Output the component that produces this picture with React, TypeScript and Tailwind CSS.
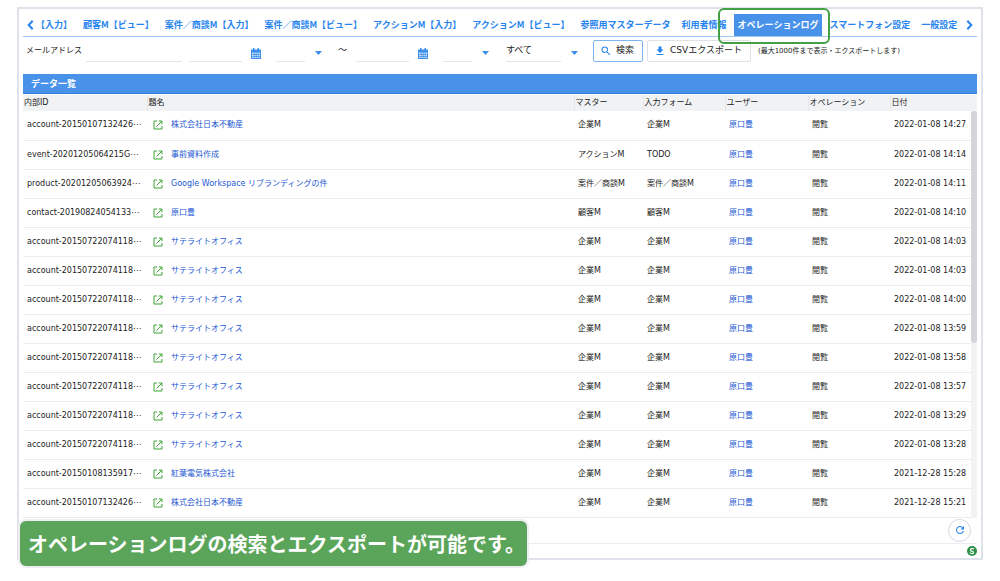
import { useState } from "react";
import type { ReactNode } from "react";
import { MdDownload, MdRefresh, MdSearch } from "react-icons/md";

type LogRow = {
  id: string;
  title: string;
  master: string;
  form: string;
  date: string;
};

const tabs = [
  "【入力】",
  "顧客M【ビュー】",
  "案件／商談M【入力】",
  "案件／商談M【ビュー】",
  "アクションM【入力】",
  "アクションM【ビュー】",
  "参照用マスターデータ",
  "利用者情報",
  "オペレーションログ",
  "スマートフォン設定",
  "一般設定",
];

const ACTIVE_TAB = "オペレーションログ";

const satellite = (date: string): LogRow => ({
  id: "account-20150722074118",
  title: "サテライトオフィス",
  master: "企業M",
  form: "企業M",
  date,
});

const rows: LogRow[] = [
  { id: "account-20150107132426", title: "株式会社日本不動産", master: "企業M", form: "企業M", date: "2022-01-08 14:27" },
  { id: "event-20201205064215G", title: "事前資料作成", master: "アクションM", form: "TODO", date: "2022-01-08 14:14" },
  { id: "product-20201205063924", title: "Google Workspace リブランディングの件", master: "案件／商談M", form: "案件／商談M", date: "2022-01-08 14:11" },
  { id: "contact-20190824054133", title: "原口豊", master: "顧客M", form: "顧客M", date: "2022-01-08 14:10" },
  satellite("2022-01-08 14:03"),
  satellite("2022-01-08 14:03"),
  satellite("2022-01-08 14:00"),
  satellite("2022-01-08 13:59"),
  satellite("2022-01-08 13:58"),
  satellite("2022-01-08 13:57"),
  satellite("2022-01-08 13:29"),
  satellite("2022-01-08 13:28"),
  { id: "account-20150108135917", title: "紅葉電気株式会社", master: "企業M", form: "企業M", date: "2021-12-28 15:28" },
  { id: "account-20150107132426", title: "株式会社日本不動産", master: "企業M", form: "企業M", date: "2021-12-28 15:21" },
];

const columns = [
  { label: "内部ID", width: "w-[124px]" },
  { label: "題名", width: "" },
  { label: "マスター", width: "w-[69px]" },
  { label: "入力フォーム", width: "w-[82px]" },
  { label: "ユーザー", width: "w-[83px]" },
  { label: "オペレーション", width: "w-[82px]" },
  { label: "日付", width: "w-[81px]" },
];

function Chevron({ direction }: { direction: "left" | "right" }) {
  return (
    <svg viewBox="0 0 6 10" className="h-[10px] w-[7px]" fill="none" stroke="currentColor" strokeWidth="2">
      <path d={direction === "left" ? "M5.2 0.8 1.2 5l4 4.2" : "M0.8 0.8l4 4.2-4 4.2"} />
    </svg>
  );
}

function CalendarIcon() {
  return (
    <svg viewBox="0 0 20 22" className="h-[11px] w-[10px]">
      <path d="M4 0h3v3h6V0h3v3h4v19H0V3h4z" fill="#3b8eea" />
      <path
        d="M2 9h3.500v3H2zM7 9h2.500v3H7zM11 9h2.500v3H11zM15 9h3v3h-3zM2 13.500h3.500v2.500H2zM7 13.500h2.500v2.500H7zM11 13.500h2.500v2.500H11zM15 13.500h3v2.500h-3zM2 17.500h3.500V20H2zM7 17.500h2.500V20H7zM11 17.500h2.500V20H11zM15 17.500h3V20h-3z"
        fill="#fff"
        fillOpacity="0.8"
      />
    </svg>
  );
}

function OpenIcon() {
  return (
    <svg viewBox="0 0 20 20" className="size-[10px] shrink-0" fill="none" stroke="#3fa535" strokeWidth="2">
      <path d="M8 2H2v16h16v-6" />
      <path d="M11.500 2H18v6.500M18 2 7 13" />
    </svg>
  );
}

function TabBar() {
  return (
    <nav className="flex items-center border-b border-[#9fcaf8] px-1 pt-[5px] font-['Noto_Sans_CJK_JP',sans-serif] text-[9px] leading-[22px] font-bold text-[#2784ee]">
      <button type="button" aria-label="前のタブ" className="shrink-0">
        <Chevron direction="left" />
      </button>
      <ul className="ml-0.5 flex min-w-0 flex-1 gap-[3px] whitespace-nowrap">
        {tabs.map((tab) =>
          tab === ACTIVE_TAB ? (
            <li key={tab} className="relative bg-[#4892ea] px-1 text-white">
              <a href="#log" aria-current="page">{tab}</a>
              <span className="pointer-events-none absolute -top-1.5 -right-2 -bottom-2 -left-4 z-10 rounded-md border-2 border-[#43a047]" />
            </li>
          ) : (
            <li key={tab} className="px-1 first:pl-0">
              <a href="#tab">{tab}</a>
            </li>
          )
        )}
      </ul>
      <button type="button" aria-label="次のタブ" className="shrink-0">
        <Chevron direction="right" />
      </button>
    </nav>
  );
}

function DateField({ label }: { label: string }) {
  return (
    <div className="flex items-center">
      <input type="text" aria-label={label} className="h-[21px] w-[53px] border-b border-[#e6e6e8] outline-none" />
      <button type="button" aria-label={`${label}を選択`} className="ml-[9px] pt-1">
        <CalendarIcon />
      </button>
    </div>
  );
}

function SelectField({ label, width, children }: { label: string; width: string; children?: ReactNode }) {
  return (
    <div className="flex items-center">
      <select aria-label={label} className={`h-[21px] appearance-none border-b border-[#e6e6e8] bg-transparent outline-none ${width}`}>
        {children}
      </select>
      <svg viewBox="0 0 7 4" className="mt-1 ml-[10px] h-1 w-[7px] fill-[#3b8eea]">
        <path d="M0 0h7L3.5 4z" />
      </svg>
    </div>
  );
}

function SearchForm() {
  const [email, setEmail] = useState("");

  return (
    <form className="flex items-center pt-[3px] pb-3 pl-[3px] text-[9px] whitespace-nowrap" onSubmit={(event) => event.preventDefault()}>
      <label htmlFor="email" className="w-[60px] text-[8px]">メールアドレス</label>
      <input
        id="email"
        value={email}
        onChange={(event) => setEmail(event.target.value)}
        className="h-[21px] w-[96px] border-b border-[#e6e6e8] outline-none"
      />
      <div className="ml-[7px] flex items-center gap-[15px]">
        <DateField label="開始日" />
        <SelectField label="開始時刻" width="w-[29px]" />
      </div>
      <span className="mx-2 w-[18px] pl-2">～</span>
      <div className="flex items-center gap-[15px]">
        <DateField label="終了日" />
        <SelectField label="終了時刻" width="w-[29px]" />
      </div>
      <div className="ml-[17px]">
        <SelectField label="オペレーション" width="w-[55px]">
          <option>すべて</option>
        </SelectField>
      </div>
      <button type="submit" className="ml-[15px] flex h-[22px] items-center gap-1 rounded-xs border border-[#7db4f2] px-1.5 pr-2">
        <MdSearch className="size-3 text-[#2784ee]" />
        検索
      </button>
      <button type="button" className="ml-1 flex h-[22px] items-center gap-1 rounded-xs border border-[#dfe1e5] px-1.5 pr-2">
        <MdDownload className="size-3 text-[#2784ee]" />
        CSVエクスポート
      </button>
      <span className="ml-[7px] text-[7px]">(最大1000件まで表示・エクスポートします)</span>
    </form>
  );
}

function LogTable() {
  return (
    <div className="flex text-[8px]">
      <table className="min-w-0 flex-1 table-fixed border-collapse whitespace-nowrap">
        <thead>
          <tr className="h-4 bg-[#f1f2f4]">
            {columns.map((column) => (
              <th key={column.label} className={`border-l border-[#e6e7ea] p-0 pl-px text-left font-normal first:border-l-0 ${column.width}`}>
                {column.label}
              </th>
            ))}
          </tr>
        </thead>
        <tbody>
          {rows.map((row, index) => (
            <tr key={index} className="h-[29px] border-b border-[#ececee]">
              <td className="p-0 pl-1">{row.id}⋯</td>
              <td className="p-0 pl-1.5">
                <a href="#record" className="flex items-center gap-2 text-[#2458d3]">
                  <OpenIcon />
                  {row.title}
                </a>
              </td>
              <td className="p-0 pl-1">{row.master}</td>
              <td className="p-0 pl-1">{row.form}</td>
              <td className="p-0 pl-1">
                <a href="#user" className="text-[#2458d3]">原口豊</a>
              </td>
              <td className="p-0 pl-1">閲覧</td>
              <td className="p-0 pl-1">{row.date}</td>
            </tr>
          ))}
        </tbody>
      </table>
      <div className="flex w-1.5 flex-col bg-[#f1f2f4] pt-4">
        <div className="h-[57%] rounded-full bg-[#d3d5da]" />
      </div>
    </div>
  );
}

export default function App() {
  return (
    <main className="relative bg-white px-[17px] pt-[7px] pb-5 font-['DejaVu_Sans','Noto_Sans_CJK_JP',sans-serif] text-[#222]">
      <div className="border-2 border-[#dfe2ea] px-1">
        <TabBar />
        <SearchForm />
        <h1 className="mb-px border-b border-[#3380dc] bg-[#4892ea] pl-2 font-['Noto_Sans_CJK_JP',sans-serif] text-[9px] leading-[19px] font-bold text-white">
          データ一覧
        </h1>
        <LogTable />
        <div className="flex justify-end border-b border-[#ececee] py-px pr-1.5">
          <button type="button" aria-label="更新" className="flex size-[23px] items-center justify-center rounded-full border border-[#d3d8e2] text-[#2484f0]">
            <MdRefresh className="size-3" />
          </button>
        </div>
        <div className="flex justify-end py-0.5">
          <svg viewBox="0 0 20 20" className="size-[10px]">
            <circle cx="10" cy="10" r="10" fill="#2f9149" />
            <path d="M14 6.5C11 3.5 6 5.5 7 8.500S14 11 13 13.500 8 16 5.500 13" fill="none" stroke="#fff" strokeWidth="2.200" />
          </svg>
        </div>
      </div>
      <p className="absolute bottom-[14px] left-5 rounded-md bg-[#5ba55b] pr-0.5 pl-2 font-['Noto_Sans_CJK_JP',sans-serif] text-[20px] leading-[45px] font-bold whitespace-nowrap text-white shadow-[0_0_0_2px_#f0eef2]">
        オペレーションログの検索とエクスポートが可能です。
      </p>
    </main>
  );
}
